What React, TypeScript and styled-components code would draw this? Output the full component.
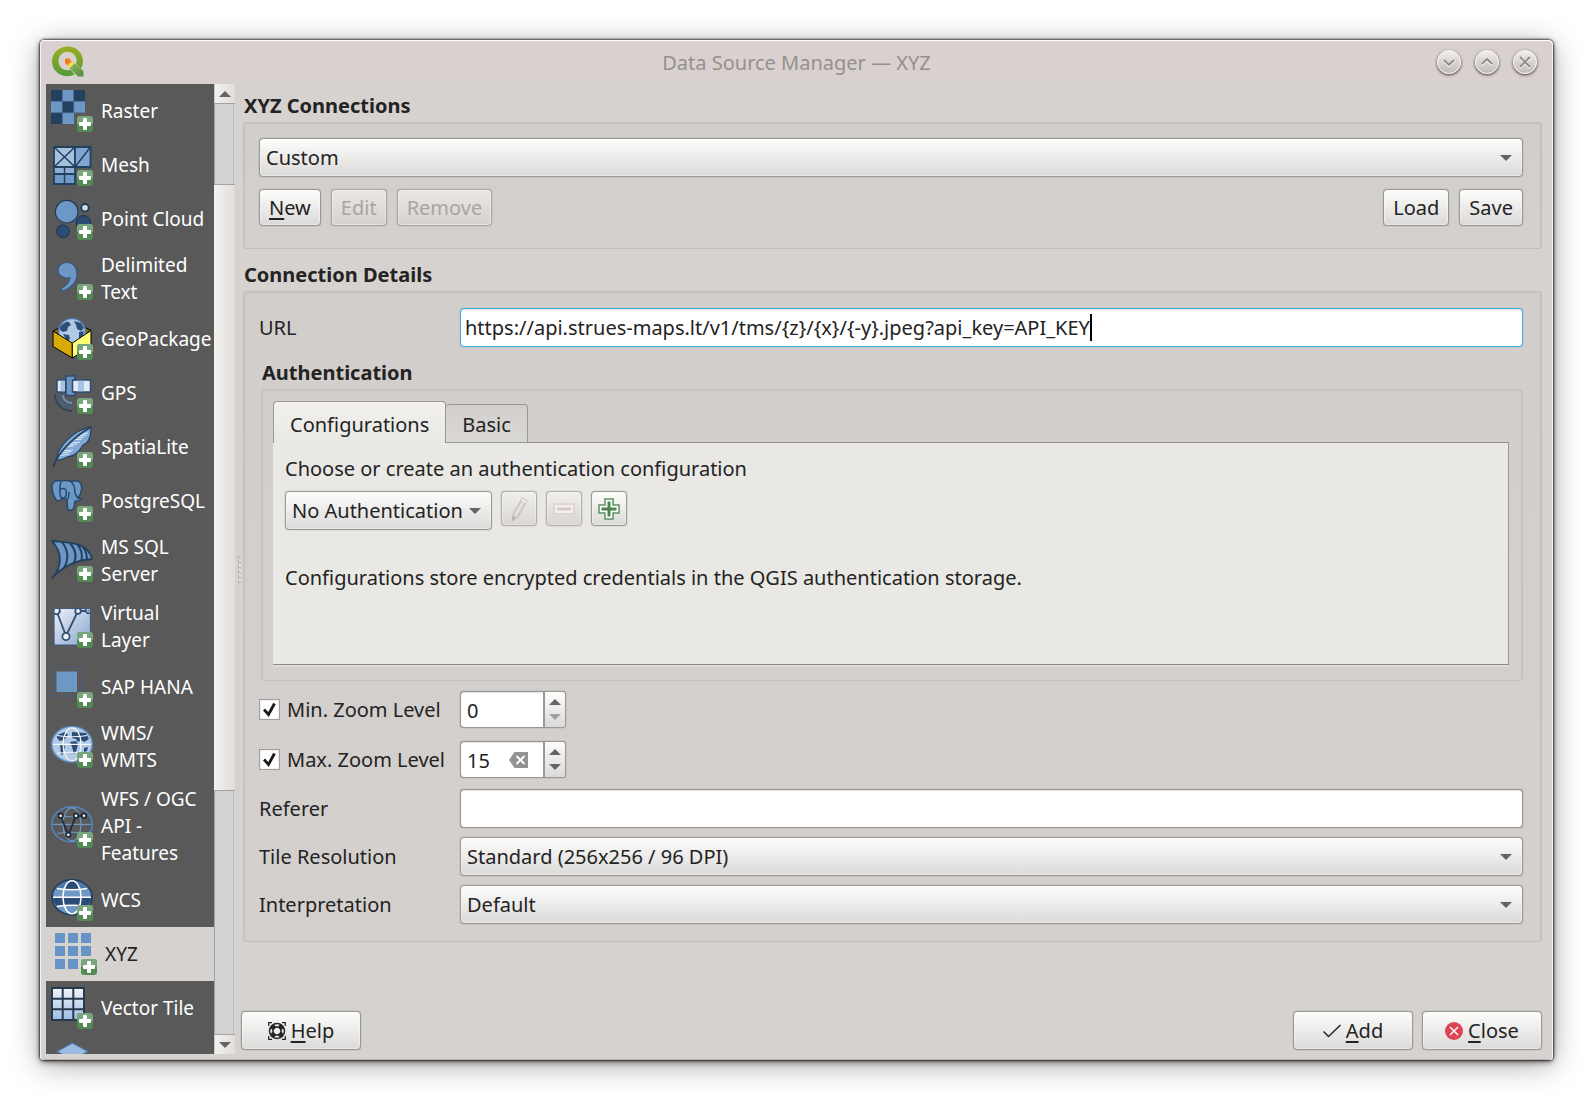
import React, { useState } from "react";
import styled, { createGlobalStyle, css } from "styled-components";

const GlobalStyle = createGlobalStyle`
  *, *::before, *::after { box-sizing: border-box; }
  body { margin: 0; background: #ffffff; }
  body, button, input, select {
    font-family: "Noto Sans", "Open Sans", sans-serif;
    font-size: 20px;
    line-height: 27px;
    color: #232323;
  }
`;

/* ---------- window ---------- */

const Desktop = styled.div`
  height: 100vh;
  padding: 40px 39px 40px 40px;
  display: flex;
`;

const WindowFrame = styled.div`
  flex: 1;
  min-width: 0;
  display: flex;
  flex-direction: column;
  padding: 0 6px 6px;
  border-radius: 5px 5px 4px 4px;
  background: linear-gradient(#d9d1cf 0, #d9d1cf 40px, #d6d2cf 48px, #d6d2cf 100%);
  box-shadow:
    inset 0 1px 0 #ffffff,
    inset 1px 0 0 #f6f3f2,
    inset -1px 0 0 #f6f3f2,
    inset 0 -1px 0 #b9aeab,
    0 0 2px 1px rgba(0, 0, 0, 0.65),
    0 2px 6px rgba(0, 0, 0, 0.5),
    0 5px 30px rgba(0, 0, 0, 0.34);
`;

const TitleBar = styled.header`
  flex: none;
  height: 44px;
  display: grid;
  grid-template-columns: 120px 1fr 120px;
  align-items: center;
  padding: 0 6px;
`;

const Title = styled.h1`
  margin: 0;
  text-align: center;
  font-size: 20px;
  font-weight: 400;
  color: #95908e;
`;

const WindowButtons = styled.div`
  display: flex;
  justify-content: flex-end;
  gap: 14px;
  padding-right: 4px;
`;

const RoundButton = styled.button`
  width: 24px;
  height: 24px;
  padding: 0;
  border: 1px solid #f7f5f4;
  border-radius: 50%;
  background: linear-gradient(#f1eeec, #c2bbb7);
  box-shadow: 0 1px 3px rgba(0, 0, 0, 0.75);
  display: grid;
  place-items: center;
`;

const Body = styled.div`
  flex: 1;
  min-height: 0;
  display: flex;
`;

/* ---------- sidebar ---------- */

const SourceList = styled.nav`
  flex: none;
  width: 168px;
  overflow: hidden;
  background: #595959;
`;

const SourceItem = styled.button<{ $active?: boolean }>`
  width: 100%;
  min-height: 54px;
  padding: 6px 0 6px ${(p) => (p.$active ? 9 : 5)}px;
  border: 0;
  display: flex;
  align-items: center;
  gap: 8px;
  font-size: 19px;
  text-align: left;
  white-space: pre-line;
  background: ${(p) => (p.$active ? "#d6d2cf" : "transparent")};
  color: ${(p) => (p.$active ? "#232323" : "#ffffff")};

  svg { flex: none; }
`;

const ScrollBar = styled.div`
  flex: none;
  width: 21px;
  display: flex;
  flex-direction: column;
  background: #d3d3d3;
`;

const scrollPart = css`
  border: 0;
  padding: 0;
  background: linear-gradient(90deg, #f3f2f0, #e0deda);
`;

const ScrollArrow = styled.button<{ $end?: boolean }>`
  ${scrollPart}
  height: 20px;
  flex: none;
  display: grid;
  place-items: center;
  border-left: 1px solid #c9c7c5;
  border-${(p) => (p.$end ? "top" : "bottom")}: 1px solid #a5a3a1;
`;

const ScrollTrack = styled.div<{ $grow: number }>`
  flex: ${(p) => p.$grow} 1 0;
  margin-right: 1px;
  border-left: 1px solid #a5a3a1;
  border-right: 1px solid #bcbab8;
`;

const ScrollHandle = styled.div<{ $grow: number }>`
  ${scrollPart}
  flex: ${(p) => p.$grow} 1 0;
  border: solid #a5a3a1;
  border-width: 1px 0;
`;

const Splitter = styled.div`
  flex: none;
  width: 6px;
  display: flex;
  flex-direction: column;
  align-items: flex-end;
  justify-content: center;
  gap: 2px;
`;

const SplitterDot = styled.i`
  width: 3px;
  height: 3px;
  background: #e4e1df;
  border: solid #b3afac;
  border-width: 0 0 1px 1px;
`;

/* ---------- main panel ---------- */

const Main = styled.main`
  flex: 1;
  min-width: 0;
  display: flex;
  flex-direction: column;
  padding: 8px 5px 4px 0;
`;

const Sections = styled.div`
  flex: 1;
  margin-left: 2px;
  display: flex;
  flex-direction: column;
  gap: 12px;
`;

const Group = styled.section<{ $inset?: boolean }>`
  ${(p) => p.$inset && "margin: 12px 0 0 2px;"}
`;

const GroupTitle = styled.h2`
  margin: 0 0 3px 1px;
  font-size: 20px;
  line-height: 27px;
  font-weight: 700;
`;

const GroupBox = styled.div<{ $pad: string }>`
  padding: ${(p) => p.$pad};
  border: 1px solid #c3bfbc;
  border-radius: 3px;
  background: linear-gradient(#d2cecb, #d4d0cd);
  box-shadow: inset 1px 1px 2px rgba(0, 0, 0, 0.06), inset -1px 0 0 #c8c4c1;
`;

const raised = css`
  border: 1px solid #9a9896;
  border-radius: 4px;
  background: linear-gradient(#fdfdfc, #dbdad8);
  box-shadow: 0 0 1px rgba(0, 0, 0, 0.5), inset 0 0 0 1px rgba(255, 255, 255, 0.35);
`;

const PushButton = styled.button<{ $large?: boolean }>`
  ${raised}
  height: ${(p) => (p.$large ? 39 : 37)}px;
  ${(p) => p.$large && "width: 120px;"}
  padding: 0 9px;
  display: inline-flex;
  align-items: center;
  justify-content: center;
  gap: 5px;
  white-space: pre;

  &:disabled {
    color: #a9a5a2;
    border-color: #aaa7a4;
    background: linear-gradient(#e9e7e5, #d6d2cf);
  }
`;

const Mnemonic = styled.span`
  text-decoration: underline;
  text-decoration-thickness: 2px;
  text-underline-offset: 3px;
  text-decoration-skip-ink: none;
`;

const ToolButton = styled.button`
  ${raised}
  width: 36px;
  height: 35px;
  padding: 0;
  display: grid;
  place-items: center;

  &:disabled {
    border-color: #b1aeab;
    background: linear-gradient(#f0efec, #d9d6d3);
  }
`;

const ButtonRow = styled.div`
  display: flex;
  gap: 10px;
  margin-top: 12px;
`;

const Spacer = styled.span`
  flex: 1;
`;

const ComboFrame = styled.div<{ $width?: number }>`
  display: grid;
  align-items: center;
  min-width: 0;
  ${(p) => p.$width && `width: ${p.$width}px;`}

  > * { grid-area: 1 / 1; }
  > svg { justify-self: end; margin-right: 11px; pointer-events: none; }
`;

const Combo = styled.select`
  ${raised}
  appearance: none;
  width: 100%;
  height: 39px;
  padding: 0 24px 0 6px;
`;

const FormRow = styled.div<{ $tall?: boolean }>`
  display: grid;
  grid-template-columns: 201px minmax(0, 1fr);
  align-items: center;
  min-height: ${(p) => (p.$tall ? 41 : 39)}px;
`;

const FormRows = styled.div`
  display: flex;
  flex-direction: column;
  gap: 9px;
  padding-top: 8px;
`;

const sunken = css<{ $focused?: boolean }>`
  border: 1px solid ${(p) => (p.$focused ? "#45a9e0" : "#9a9896")};
  border-radius: 4px;
  background: #ffffff;
  box-shadow:
    0 0 1px ${(p) => (p.$focused ? "#45a9e0" : "rgba(0, 0, 0, 0.5)")},
    inset 0 1px 1px rgba(0, 0, 0, 0.12);
`;

const TextBox = styled.input`
  ${sunken}
  width: 100%;
  height: 39px;
  padding: 0 4px;
`;

const UrlFrame = styled.div<{ $focused?: boolean }>`
  ${sunken}
  height: 39px;
  display: flex;
  align-items: center;
  padding: 0 4px;
  overflow: hidden;
`;

const UrlInput = styled.input`
  field-sizing: content;
  min-width: 0;
  border: 0;
  padding: 0;
  background: none;
  outline: none;
  caret-color: transparent;
`;

const TextCursor = styled.i`
  flex: none;
  width: 2px;
  height: 27px;
  background: #000000;
`;

const Spin = styled.div`
  ${sunken}
  width: 106px;
  height: 37px;
  display: flex;
  align-items: center;
  overflow: hidden;
`;

const SpinInput = styled.input`
  flex: 1;
  min-width: 0;
  height: 100%;
  border: 0;
  padding: 2px 0 0 6px;
  background: none;
  appearance: textfield;

  &::-webkit-inner-spin-button { appearance: none; }
`;

const ClearButton = styled.button`
  flex: none;
  border: 0;
  padding: 0 15px 0 0;
  background: none;
  display: grid;
`;

const Steppers = styled.div`
  width: 22px;
  height: 100%;
  border-left: 2px solid #9a9896;
  background: linear-gradient(#fdfdfc, #dbdad8);
  display: grid;
  padding: 2px 0;
`;

const Step = styled.button`
  border: 0;
  padding: 0;
  background: none;
  display: grid;
  place-items: center;
`;

const CheckLabel = styled.label`
  display: flex;
  align-items: center;
  gap: 7px;
`;

const CheckMark = styled.span`
  display: grid;

  > * { grid-area: 1 / 1; }
  > svg { pointer-events: none; opacity: 0; }
  > input:checked + svg { opacity: 1; }
`;

const CheckBox = styled.input`
  appearance: none;
  width: 21px;
  height: 21px;
  margin: 0;
  border: 1px solid #a19f9d;
  background: #ffffff;
  box-shadow: inset 0 0 2px rgba(0, 0, 0, 0.2);
`;

const TabRow = styled.div`
  display: flex;
  align-items: flex-end;
  height: 42px;
  margin-bottom: -1px;
`;

const Tab = styled.button<{ $active?: boolean }>`
  height: ${(p) => (p.$active ? 42 : 39)}px;
  padding: ${(p) => (p.$active ? "3px" : "2px")} 16px 0;
  border: 1px solid #9a9896;
  ${(p) => (p.$active ? "border-bottom: 0;" : "border-left: 0;")}
  border-radius: 4px 4px 0 0;
  background: ${(p) => (p.$active ? "linear-gradient(#f2f1ee, #e9e8e4)" : "linear-gradient(#d2cfcc, #dad8d5)")};
`;

const TabPane = styled.div`
  min-height: 223px;
  padding: 12px;
  border-top: 1px solid #8f8d8b;
  border-bottom: 1px solid #8f8d8b;
  border-right: 1px solid #9a9896;
  background: #e9e8e4;
  box-shadow: 0 2px 0 #dedbd8;
`;

const PaneText = styled.p<{ $gap?: boolean }>`
  margin: ${(p) => (p.$gap ? "34px" : "0")} 0 0;
`;

const AuthRow = styled.div`
  display: flex;
  align-items: flex-start;
  gap: 9px;
  margin-top: 9px;
`;

const Footer = styled.footer`
  display: flex;
  gap: 9px;
`;

/* ---------- glyphs ---------- */

const Arrow = ({ up, faded }: { up?: boolean; faded?: boolean }) => (
  <svg width="12" height="6" viewBox="0 0 12 6" aria-hidden="true">
    <path d={up ? "M0 6 6 0l6 6z" : "M0 0h12L6 6z"} fill={faded ? "#a3a1a0" : "#666463"} />
  </svg>
);

const QgisLogo = () => (
  <svg width="32" height="32" viewBox="0 0 32 32" aria-hidden="true">
    <defs>
      <linearGradient id="q" x1="0" y1="0" x2="0" y2="1">
        <stop offset="0" stopColor="#9ab023" />
        <stop offset="1" stopColor="#559a38" />
      </linearGradient>
      <linearGradient id="qt" x1="0" y1="0" x2="1" y2="1">
        <stop offset="0" stopColor="#93b663" />
        <stop offset="1" stopColor="#4f8c3c" />
      </linearGradient>
    </defs>
    <path
      d="M15.500 .5C24 .5 31 6.500 31 15c0 3-.8 5.500-2 7.500l-5-4.500c.5-1 .7-2 .7-3.200 0-5-4-9-9.200-9s-9 4-9 9.200 4 9.200 9 9.200c1 0 2-.2 3-.5l4 4.800c-2 1-4.500 1.700-7 1.700C7 30.200 0 24 0 15.500S7 .5 15.500.5z"
      fill="url(#q)"
    />
    <path d="M13 12.700l4.800-.2.800 3.600-3.500 3.200-2.100-2.500z" fill="#ee7913" />
    <path d="M17.500 12.700l3 3-5 4.500-1-1.500 3.300-3z" fill="#f29a50" />
    <path d="M20.300 15.300l2 2-4.800 5-2.300-2.300z" fill="#f5e04a" />
    <path d="M22.500 17.300L31.500 25v5.500h-5.500l-8.300-8z" fill="url(#qt)" />
  </svg>
);

const BLUE = "#6d97c4";
const NAVY = "#24405f";

const PlusBadge = () => (
  <g>
    <rect x="26" y="26" width="16" height="16" rx="3" fill="#548a56" />
    <path d="M26 34v-5a3 3 0 0 1 3-3h10a3 3 0 0 1 3 3v5z" fill="#7ba57c" />
    <rect x="32" y="28" width="4" height="12" rx="1" fill="#ffffff" />
    <rect x="28" y="32" width="12" height="4" rx="1" fill="#ffffff" />
  </g>
);

const meridians = (
  <>
    <path d="M2 18.300h38M6 9.500c9 1.500 21 1.500 30 0M6 27.500c9-1.500 21-1.500 30 0" />
    <ellipse cx="21" cy="18.300" rx="9" ry="16.500" />
  </>
);

const art: Record<string, React.ReactNode> = {
  raster: (
    <>
      <path d="M0 0h34v23H23v11H0z" fill={BLUE} />
      <path d="M0 0h11.300v11.300H0zM22.700 0H34v11.300H22.700zM11.300 11.300h11.400v11.400H11.300zM0 22.700h11.300V34H0z" fill={NAVY} />
      <path d="M11.300 0v34M22.700 0v23M0 11.300h34M0 22.700h34" stroke="#47688f" strokeWidth=".6" />
    </>
  ),
  mesh: (
    <g stroke={NAVY} strokeWidth="1.800">
      <path d="M3 3h21v20H3z" fill="#a6c1de" />
      <path d="M24 3h15.500v20H24z" fill="#7fa6d2" />
      <path d="M3 23h21v17H3z" fill="#6f9bcb" />
      <path d="M3 23h21v7H3z" fill="#8fb0d6" />
      <path d="M3 3l21 20M24 3L3 23M24 23L39.500 3M13.500 23v17" fill="none" strokeWidth="1.500" />
    </g>
  ),
  points: (
    <g stroke="#203a58" strokeWidth="1.200">
      <circle cx="32.500" cy="25" r="7.300" fill="#2b4c76" />
      <circle cx="15.700" cy="13.700" r="11.300" fill={BLUE} />
      <circle cx="34" cy="9.700" r="3.700" fill="#cfdcea" strokeWidth="1.800" />
      <circle cx="12" cy="33.300" r="6.300" fill="#2b4c76" />
    </g>
  ),
  comma: (
    <path
      d="M15.500 4.500C22 4.500 26 9 26 16c0 8-6 14.500-15 17l-1-2.500C15 28 18.500 24 19 19.500c-2.500 1-5.500.5-8-1C8 17 7 14.500 7 12c0-4.500 4-7.500 8.500-7.500z"
      fill={BLUE}
      stroke="#345a86"
      strokeWidth="1.200"
    />
  ),
  geopackage: (
    <>
      <path d="M2 13L21 3l19 9.500-19 12z" fill="#8a6b00" stroke="#000" strokeWidth="1" />
      <circle cx="21" cy="14" r="13.500" fill="#afc9e6" stroke="#4f7cb0" strokeWidth="1.500" />
      <path d="M9 9c3-4 7-6 9-5l2 3-3 2-1 4-4 1-3-2zM23 3l7 2 3 5-3 3-4-2-1-4zM12 16l6 1 1 4-3 2zM28 14l5-1-1 5-4 3z" fill="#2e4f7a" />
      <path d="M2 13l19.300 12v15L2 28.500z" fill="#d8aa05" stroke="#000" strokeWidth="1" />
      <path d="M40 12.500L21.300 25v15L40 28.500z" fill="#ffff75" stroke="#000" strokeWidth="1" />
    </>
  ),
  gps: (
    <>
      <g fill="none" strokeWidth="1.800">
        <path d="M4 22c0 10 7 17 17 17" stroke="#2b4668" />
        <path d="M8 22c0 7 5.500 13 13 13" stroke="#3c628f" />
        <path d="M12 23c0 5 4 8 9 8" stroke={BLUE} />
      </g>
      <path d="M6 8h8.500v12H6zM21 8h18.500v12H21z" fill="#e2eaf4" stroke="#2b4c76" strokeWidth="1.500" />
      <path d="M9.500 8.800h4v10.400h-4zM27 8.800h6v10.400h-6z" fill="#a9c4e2" />
      <path d="M15 4h9v4h-2.500v12H24v3.500h-9V4z" fill={BLUE} stroke="#2b4c76" strokeWidth="1.500" />
    </>
  ),
  feather: (
    <>
      <path d="M40 1C24 4 8 18 5 34c4 0 8-1 11-3 9-1 13-7 16-12 6-2 8-10 8-18z" fill="#7fa8d5" stroke={NAVY} strokeWidth="1.200" />
      <path d="M14 21l9-1M11 25l11-1M19 17l10-1M24 12l9-1M30 8l7-1M8 30l10-2M17 19l9-1M21 14l10-1M27 10l8-1M9 27.500l11-2" stroke="#dce8f4" strokeWidth="1.200" />
      <path d="M40 1C26 9 8 24 2 41" fill="none" stroke={NAVY} strokeWidth="1.800" />
    </>
  ),
  elephant: (
    <g stroke="#26486f" strokeWidth="1.500" fill={BLUE} strokeLinejoin="round">
      <path d="M9 1C3 0 .5 3 1 8c.5 6 3 12 6 13 2 .5 3-2 4-3 3 2 5 1 5 1l.5 9c1 3.500 6 3 6.500-1l1-6c3 .5 5 0 7-2l-4-.5C30 14 32 7 29.500 3 27 .5 23 .5 20 1.500 17 .3 12 .5 9 1z" />
      <path d="M10 2C8 6 9 10 9 13c0 3 1 5 3 5 3 0 4-3 3-8-1-2-4-2-6 0M20 1.500c3 3 4 7 4 11 0 2 2 4 3 6M16 19c2 0 2-4 2-7" fill="none" />
    </g>
  ),
  sail: (
    <>
      <path d="M1 1c17 2 36 1 40 18C27 20 12 26 1 38 11 28 12 13 1 1z" fill={BLUE} stroke={NAVY} strokeWidth="1.800" strokeLinejoin="round" />
      <path d="M11 2c7 9 7 19 1 27M19 3c6 7 7 15 3 22M26 4c5 6 6 12 4 18M32 7c3 4 4 9 4 13" fill="none" stroke={NAVY} strokeWidth="2" />
    </>
  ),
  virtual: (
    <>
      <defs>
        <linearGradient id="vl" x1="0" y1="0" x2="1" y2="1">
          <stop offset="0" stopColor="#eef1f6" />
          <stop offset="1" stopColor="#86a6d0" />
        </linearGradient>
      </defs>
      <rect x="3" y="2.500" width="36.500" height="36.500" rx="1.500" fill="url(#vl)" stroke="#3c5a80" strokeWidth="1.200" />
      <path d="M6 6l9 24L27 5h11" fill="none" stroke="#34506f" strokeWidth="1.800" />
      <g fill="#eef1f6" stroke="#34506f" strokeWidth="1.800">
        <circle cx="15" cy="30.500" r="3.600" />
        <circle cx="27" cy="5" r="2.800" />
        <path d="M3 7a3 3 0 0 0 5-4M35 3a3 3 0 0 0 4 4" />
      </g>
    </>
  ),
  hana: (
    <>
      <rect x="5.500" y="5.500" width="20.500" height="20.500" fill={BLUE} />
      <rect x="1.500" y="1.500" width="28.500" height="28.500" fill="none" stroke="#3e608c" strokeWidth="2" strokeDasharray="2 4" />
    </>
  ),
  wms: (
    <>
      <ellipse cx="21" cy="18.300" rx="20.300" ry="17.800" fill="#b3cae4" stroke="#5e8cc2" strokeWidth="1.500" />
      <path d="M6 9l8-3 3 3-4 5-4 1-3-3zM9 18l5 2-2 8-2 1zM19 16l6-1 2 3-2 8-2 2-2-7zM21 6l14 1 3 6-5 3-3-2-3 2-2-3-4-1zM33 22l4-1-1 4-3 1z" fill="#2b4c76" />
      <g fill="none" stroke="#f2f6fa" strokeWidth="1.200">{meridians}</g>
    </>
  ),
  wfs: (
    <>
      <ellipse cx="21" cy="18.300" rx="20.300" ry="17.600" fill="none" stroke="#5585c2" strokeWidth="1.500" />
      <g fill="none" stroke={BLUE} strokeWidth="1.200">{meridians}</g>
      <path d="M9.700 10l7.600 19L25 10h8" fill="none" stroke="#1f2d3d" strokeWidth="1.800" />
      <g fill="#ffffff" stroke="#1f2d3d" strokeWidth="1.800">
        <circle cx="9.700" cy="9.700" r="2.200" />
        <circle cx="25" cy="9.700" r="2.200" />
        <circle cx="33" cy="9.700" r="2.200" />
        <circle cx="17.300" cy="28.700" r="2.200" />
      </g>
    </>
  ),
  wcs: (
    <>
      <ellipse cx="21" cy="18.300" rx="20.200" ry="17.600" fill={BLUE} />
      <path d="M2 18.500h9.500c0 3 .6 6 1.500 8H5c-2-2.500-3-5-3-8zM30.500 18.500H40c0 3-1 5.500-3 8h-8c1-2 1.500-5 1.500-8zM13.500 10c1-4 4-8 7.500-8s6.500 4 7.500 8c-4 .6-11 .6-15 0zM11.500 18.500h19c0 3-.6 6-1.500 8-5-.8-11-.8-16 0-1-2-1.500-5-1.500-8z" fill="#2b4c76" />
      <path d="M6 9c3-4 7-6 11-7-2 2-4 5-5 8zM36 9c-3-4-7-6-11-7 2 2 4 5 5 8z" fill="#4f79a9" />
      <ellipse cx="21" cy="18.300" rx="20" ry="17.500" fill="none" stroke={NAVY} strokeWidth="1.800" />
      <g fill="none" stroke="#ffffff" strokeWidth="1.500">{meridians}</g>
    </>
  ),
  xyz: (
    <path
      d="M0 0h10v10H0zM13 0h10v10H13zM26 0h10v10H26zM0 13h10v10H0zM13 13h10v10H13zM26 13h10v10H26zM0 26h10v10H0zM13 26h10v10H13z"
      fill="#6794c6"
    />
  ),
  vector: (
    <>
      <defs>
        <linearGradient id="vt" x1="0" y1="0" x2="0" y2="1">
          <stop offset="0" stopColor="#f4f5f6" />
          <stop offset="1" stopColor="#9dbde6" />
        </linearGradient>
      </defs>
      <rect x="1" y="1" width="32" height="32" fill="url(#vt)" stroke="#27384f" strokeWidth="2" />
      <path d="M11.700 0v34M22.300 0v34M0 11.700h34M0 22.300h34" stroke="#27384f" strokeWidth="2" />
    </>
  ),
  diamond: <path d="M21.500 2L37 10.500 21.500 19 6 10.500z" fill="#9dbbe0" stroke="#4c76a8" strokeWidth="1.200" />,
};

const SourceIcon = ({ name }: { name: string }) => (
  <svg width="42" height="42" viewBox="0 0 42 42" aria-hidden="true">
    {art[name]}
    <PlusBadge />
  </svg>
);

const sources = [
  { icon: "raster", label: "Raster" },
  { icon: "mesh", label: "Mesh" },
  { icon: "points", label: "Point Cloud" },
  { icon: "comma", label: "Delimited\nText" },
  { icon: "geopackage", label: "GeoPackage" },
  { icon: "gps", label: "GPS" },
  { icon: "feather", label: "SpatiaLite" },
  { icon: "elephant", label: "PostgreSQL" },
  { icon: "sail", label: "MS SQL\nServer" },
  { icon: "virtual", label: "Virtual\nLayer" },
  { icon: "hana", label: "SAP HANA" },
  { icon: "wms", label: "WMS/\nWMTS" },
  { icon: "wfs", label: "WFS / OGC\nAPI -\nFeatures" },
  { icon: "wcs", label: "WCS" },
  { icon: "xyz", label: "XYZ" },
  { icon: "vector", label: "Vector Tile" },
  { icon: "diamond", label: "" },
];

const Glyph = ({ d }: { d: string }) => (
  <svg width="14" height="14" viewBox="0 0 14 14" fill="none" aria-hidden="true">
    <path d={d} transform="translate(0 1)" stroke="#ffffff" strokeWidth="1.800" />
    <path d={d} stroke="#8f8a87" strokeWidth="1.800" />
  </svg>
);

const HelpIcon = () => (
  <svg width="18" height="18" viewBox="0 0 18 18" fill="none" stroke="#232629" aria-hidden="true">
    <circle cx="9" cy="9" r="7.500" strokeWidth="1.500" />
    <circle cx="9" cy="9" r="4" strokeWidth="1.500" />
    <path d="M3.700 3.700l3 3M14.300 3.700l-3 3M3.700 14.300l3-3M14.300 14.300l-3-3" strokeWidth="5" />
    <path d="M.7 4V.7H4M14 .7h3.300V4M17.300 14v3.300H14M4 17.300H.7V14" strokeWidth="1.200" />
  </svg>
);

const AddIcon = () => (
  <svg width="18" height="18" viewBox="0 0 18 18" fill="none" aria-hidden="true">
    <path d="M.5 9.500L5.500 14.500 17.500 3" stroke="#232629" strokeWidth="1.500" />
  </svg>
);

const CloseIcon = () => (
  <svg width="18" height="18" viewBox="0 0 18 18" aria-hidden="true">
    <circle cx="9" cy="9" r="9" fill="#da4453" />
    <path d="M5 5l8 8M13 5l-8 8" stroke="#fcfcfc" strokeWidth="1.500" />
  </svg>
);

const PencilIcon = () => (
  <svg width="24" height="24" viewBox="0 0 24 24" aria-hidden="true">
    <path d="M15 1l5 3-9 16-6 4 1-7z" fill="#d5d2cd" stroke="#c4c1bc" strokeWidth="1" />
    <path d="M15 1l5 3-1.500 3-5-3z" fill="#efedea" stroke="#cfccc8" strokeWidth="1" />
    <path d="M15.500 6L8 19" stroke="#ecebe7" strokeWidth="1.500" />
    <path d="M6 19l3 2-4 3z" fill="#b5b2ae" />
  </svg>
);

const MinusIcon = () => (
  <svg width="22" height="12" viewBox="0 0 22 12" aria-hidden="true">
    <rect x="1" y="1" width="20" height="10" fill="#f1eeed" stroke="#d9cfce" strokeWidth="1.500" />
    <path d="M4 6h14" stroke="#d3c5c4" strokeWidth="2.500" />
  </svg>
);

const PlusIcon = () => (
  <svg width="22" height="22" viewBox="0 0 22 22" aria-hidden="true">
    <path d="M7 1h8v6h6v8h-6v6H7v-6H1V7h6z" fill="#ffffff" stroke="#5b9160" strokeWidth="1.500" />
    <path d="M11 3.500v15M3.500 11h15" stroke="#4d8551" strokeWidth="3" />
  </svg>
);

const ClearIcon = () => (
  <svg width="19" height="16" viewBox="0 0 19 16" aria-hidden="true">
    <path d="M0 8l5.500-8H19v16H5.500z" fill="#949292" />
    <path d="M7.500 4l8 8M15.500 4l-8 8" stroke="#ffffff" strokeWidth="1.800" />
  </svg>
);

const CheckGlyph = () => (
  <svg width="21" height="21" viewBox="0 0 21 21" fill="none" aria-hidden="true">
    <path d="M5 10.500l4.500 5L15.500 4.500" stroke="#1a1a1a" strokeWidth="2.800" />
  </svg>
);

/* ---------- composed controls ---------- */

type ComboProps = { id: string; label?: string; value: string; width?: number };

const ComboBox = ({ id, label, value, width }: ComboProps) => (
  <ComboFrame $width={width}>
    <Combo id={id} aria-label={label} defaultValue={value}>
      <option>{value}</option>
    </Combo>
    <Arrow />
  </ComboFrame>
);

type ZoomProps = { id: string; label: string; initial: number; clearable?: boolean };

const ZoomRow = ({ id, label, initial, clearable }: ZoomProps) => {
  const [value, setValue] = useState(initial);
  return (
    <FormRow $tall>
      <CheckLabel>
        <CheckMark>
          <CheckBox type="checkbox" defaultChecked />
          <CheckGlyph />
        </CheckMark>
        {label}
      </CheckLabel>
      <Spin>
        <SpinInput id={id} type="number" aria-label={label} value={value} onChange={(e) => setValue(Number(e.target.value))} />
        {clearable && (
          <ClearButton aria-label="Clear" onClick={() => setValue(0)}>
            <ClearIcon />
          </ClearButton>
        )}
        <Steppers>
          <Step aria-label="Increase" onClick={() => setValue(value + 1)}>
            <Arrow up />
          </Step>
          <Step aria-label="Decrease" disabled={value === 0} onClick={() => setValue(value - 1)}>
            <Arrow faded={value === 0} />
          </Step>
        </Steppers>
      </Spin>
    </FormRow>
  );
};

export default function App() {
  const [url, setUrl] = useState("https://api.strues-maps.lt/v1/tms/{z}/{x}/{-y}.jpeg?api_key=API_KEY");

  return (
    <Desktop>
      <GlobalStyle />
      <WindowFrame>
        <TitleBar>
          <QgisLogo />
          <Title>Data Source Manager — XYZ</Title>
          <WindowButtons>
            <RoundButton aria-label="Minimize"><Glyph d="M2 5l5 5 5-5" /></RoundButton>
            <RoundButton aria-label="Maximize"><Glyph d="M2 9l5-5 5 5" /></RoundButton>
            <RoundButton aria-label="Close window"><Glyph d="M2 2l10 10M12 2L2 12" /></RoundButton>
          </WindowButtons>
        </TitleBar>
        <Body>
          <SourceList aria-label="Data sources">
            {sources.map((s) => (
              <SourceItem key={s.icon} $active={s.icon === "xyz"} aria-label={s.label || "More"}>
                <SourceIcon name={s.icon} />
                {s.label}
              </SourceItem>
            ))}
          </SourceList>
          <ScrollBar>
            <ScrollArrow aria-label="Scroll up"><Arrow up /></ScrollArrow>
            <ScrollTrack $grow={80} />
            <ScrollHandle $grow={606} />
            <ScrollTrack $grow={244} />
            <ScrollArrow $end aria-label="Scroll down"><Arrow /></ScrollArrow>
          </ScrollBar>
          <Splitter>
            {[0, 1, 2, 3, 4, 5].map((n) => <SplitterDot key={n} />)}
          </Splitter>
          <Main>
            <Sections>
              <Group>
                <GroupTitle>XYZ Connections</GroupTitle>
                <GroupBox $pad="15px 18px 22px 15px">
                  <ComboBox id="connection" label="Connection" value="Custom" />
                  <ButtonRow>
                    <PushButton><span><Mnemonic>N</Mnemonic>ew</span></PushButton>
                    <PushButton disabled>Edit</PushButton>
                    <PushButton disabled>Remove</PushButton>
                    <Spacer />
                    <PushButton>Load</PushButton>
                    <PushButton>Save</PushButton>
                  </ButtonRow>
                </GroupBox>
              </Group>
              <Group>
                <GroupTitle>Connection Details</GroupTitle>
                <GroupBox $pad="16px 18px 17px 15px">
                  <FormRow>
                    <label htmlFor="url">URL</label>
                    <UrlFrame $focused>
                      <UrlInput id="url" type="text" value={url} onChange={(e) => setUrl(e.target.value)} />
                      <TextCursor />
                    </UrlFrame>
                  </FormRow>
                  <Group $inset>
                    <GroupTitle>Authentication</GroupTitle>
                    <GroupBox $pad="11px 13px 15px 11px">
                      <TabRow role="tablist">
                        <Tab $active role="tab" aria-selected="true">Configurations</Tab>
                        <Tab role="tab" aria-selected="false">Basic</Tab>
                      </TabRow>
                      <TabPane role="tabpanel">
                        <PaneText>Choose or create an authentication configuration</PaneText>
                        <AuthRow>
                          <ComboBox id="auth" label="Authentication configuration" value="No Authentication" width={207} />
                          <ToolButton disabled aria-label="Edit configuration"><PencilIcon /></ToolButton>
                          <ToolButton disabled aria-label="Remove configuration"><MinusIcon /></ToolButton>
                          <ToolButton aria-label="Add configuration"><PlusIcon /></ToolButton>
                        </AuthRow>
                        <PaneText $gap>Configurations store encrypted credentials in the QGIS authentication storage.</PaneText>
                      </TabPane>
                    </GroupBox>
                  </Group>
                  <FormRows>
                    <ZoomRow id="minZoom" label="Min. Zoom Level" initial={0} />
                    <ZoomRow id="maxZoom" label="Max. Zoom Level" initial={15} clearable />
                    <FormRow>
                      <label htmlFor="referer">Referer</label>
                      <TextBox id="referer" type="text" />
                    </FormRow>
                    <FormRow>
                      <label htmlFor="resolution">Tile Resolution</label>
                      <ComboBox id="resolution" value="Standard (256x256 / 96 DPI)" />
                    </FormRow>
                    <FormRow>
                      <label htmlFor="interpretation">Interpretation</label>
                      <ComboBox id="interpretation" value="Default" />
                    </FormRow>
                  </FormRows>
                </GroupBox>
              </Group>
            </Sections>
            <Footer>
              <PushButton $large><HelpIcon /><span><Mnemonic>H</Mnemonic>elp</span></PushButton>
              <Spacer />
              <PushButton $large><AddIcon /><span><Mnemonic>A</Mnemonic>dd</span></PushButton>
              <PushButton $large><CloseIcon /><span><Mnemonic>C</Mnemonic>lose</span></PushButton>
            </Footer>
          </Main>
        </Body>
      </WindowFrame>
    </Desktop>
  );
}
